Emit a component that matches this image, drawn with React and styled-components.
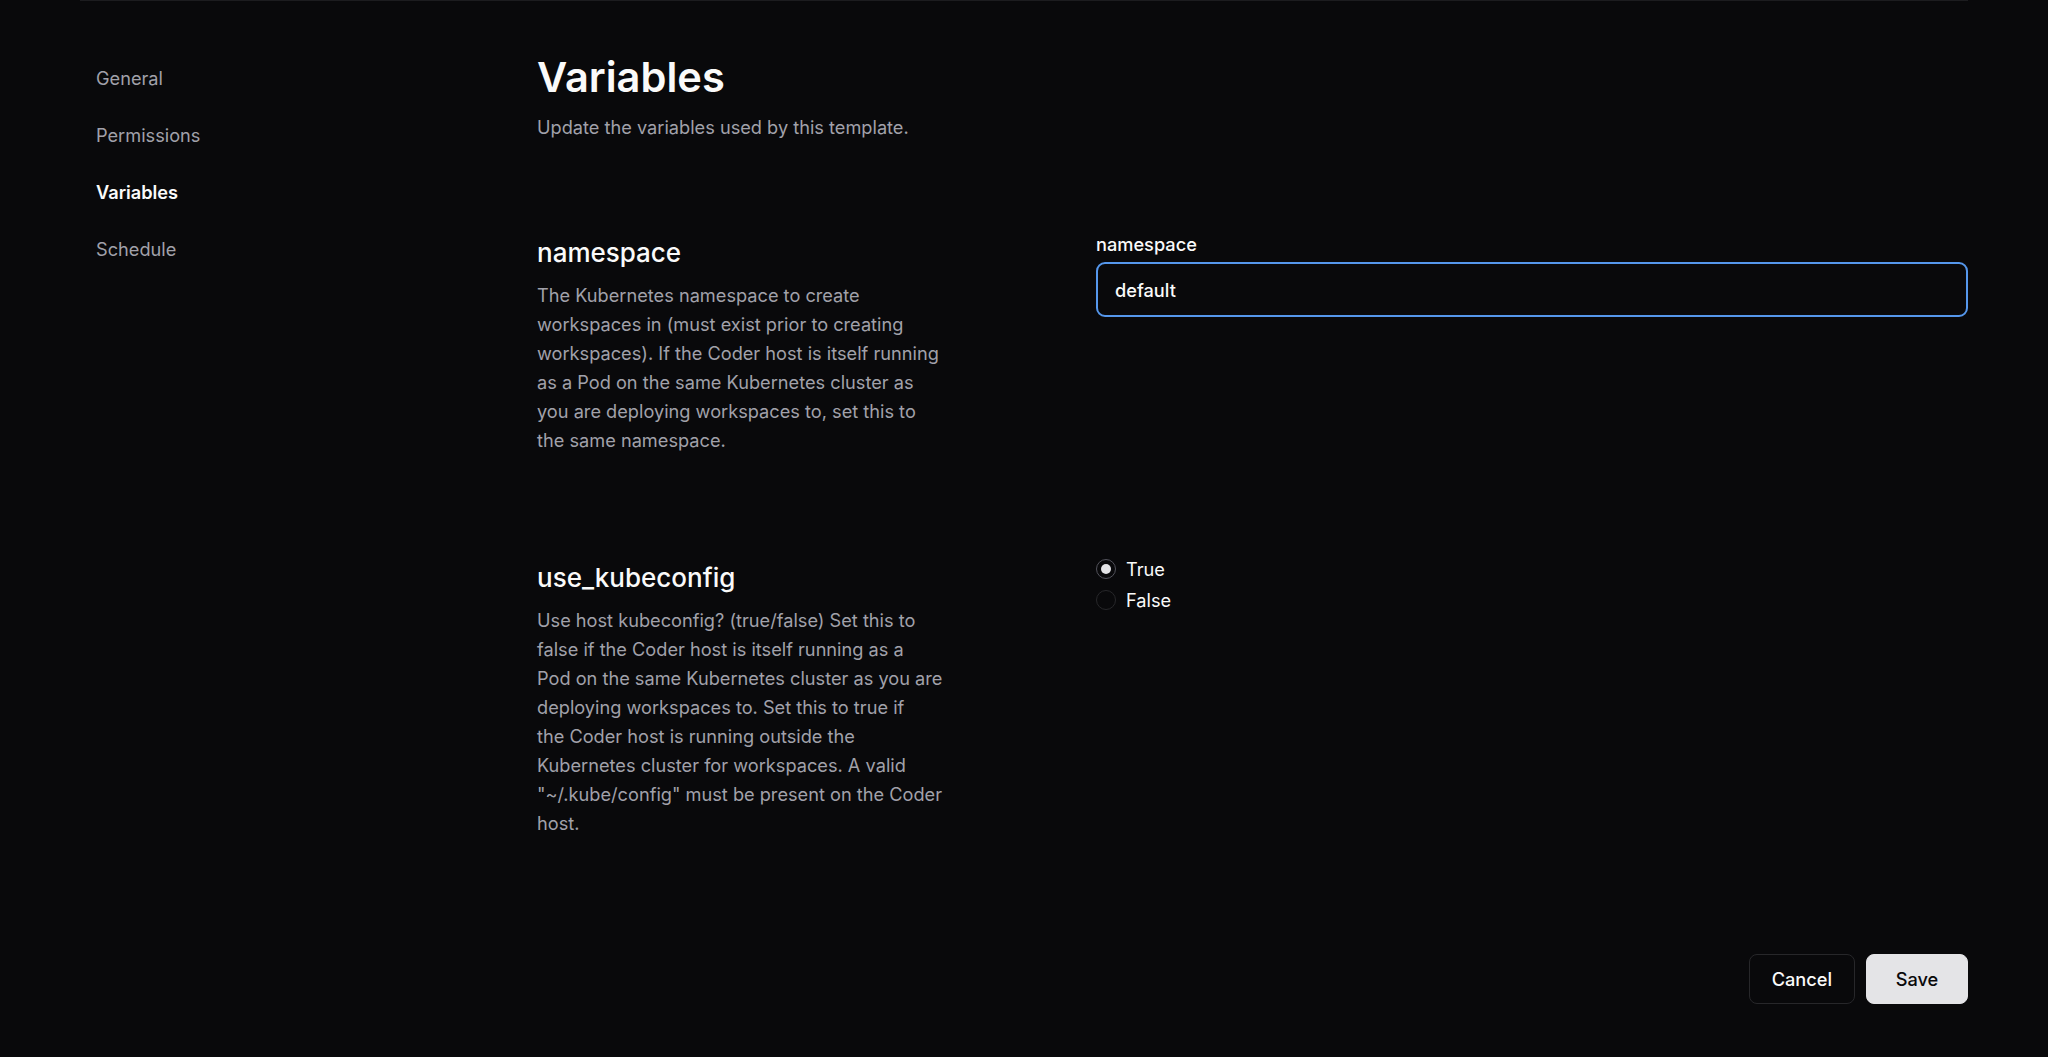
import React, { useState } from "react";
import styled, { createGlobalStyle } from "styled-components";

const GlobalStyle = createGlobalStyle`
  html, body {
    margin: 0;
    padding: 0;
    background: #09090b;
  }
  body {
    font-family: Inter, "Noto Sans", "Liberation Sans", sans-serif;
    color: #fafafa;
  }
  * { box-sizing: border-box; }
`;

const Container = styled.div`
  width: 1888px;
  margin: 0 auto;
  border-top: 1px solid #1c1c1f;
  padding: 49px 0 53px;
  display: flex;
  gap: 62px;
`;

const Sidebar = styled.nav`
  width: 395px;
  flex-shrink: 0;
  padding-left: 16px;
  display: flex;
  flex-direction: column;
`;

const NavItem = styled.a`
  display: block;
  font-size: 18.2px;
  line-height: 29px;
  padding: 14px 0;
  color: ${(p) => (p.$active ? "#fafafa" : "#a1a1aa")};
  font-weight: ${(p) => (p.$active ? 600 : 400)};
  text-decoration: none;
  cursor: pointer;
`;

const Main = styled.main`
  flex: 1;
  display: flex;
  flex-direction: column;
`;

const Title = styled.h1`
  margin: 0;
  font-size: 41.6px;
  line-height: 54px;
  font-weight: 600;
`;

const Subtitle = styled.p`
  margin: 9px 0 0;
  font-size: 18.2px;
  line-height: 29px;
  color: #a1a1aa;
`;

const Sections = styled.div`
  margin-top: 95px;
  display: flex;
  flex-direction: column;
  gap: 107px;
`;

const Section = styled.section`
  display: flex;
  gap: 156px;
  align-items: flex-start;
`;

const SectionHeader = styled.div`
  width: 403px;
  flex-shrink: 0;
`;

const SectionTitle = styled.h2`
  margin: 0;
  font-size: 26px;
  line-height: 31px;
  font-weight: 500;
`;

const SectionDesc = styled.p`
  margin: 13px 0 0;
  font-size: 18.2px;
  line-height: 29px;
  color: #a1a1aa;
  white-space: nowrap;
`;

const DescLine = styled.span`
  display: block;
`;

const Fields = styled.div`
  flex: 1;
  display: flex;
  flex-direction: column;
`;

const FieldLabel = styled.label`
  font-size: 18.2px;
  line-height: 18px;
  font-weight: 500;
  color: #fafafa;
  margin: -2px 0 9px;
`;

const TextInput = styled.input`
  height: 55px;
  width: 100%;
  padding: 0 17px;
  background: #09090b;
  border: 2px solid #5597ec;
  border-radius: 9px;
  color: #fafafa;
  font-family: inherit;
  font-size: 18.2px;
  font-weight: 500;
  outline: none;
`;

const RadioGroup = styled.div`
  margin-top: -9px;
  display: flex;
  flex-direction: column;
`;

const RadioRow = styled.label`
  display: flex;
  align-items: center;
  gap: 10px;
  height: 31px;
  cursor: pointer;
`;

const RadioCircle = styled.span`
  width: 20px;
  height: 20px;
  border-radius: 50%;
  border: 1.5px solid ${(p) => (p.$checked ? "#52525b" : "#27272a")};
  display: flex;
  align-items: center;
  justify-content: center;
  &::after {
    content: "";
    width: 10px;
    height: 10px;
    border-radius: 50%;
    background: #e4e4e7;
    display: ${(p) => (p.$checked ? "block" : "none")};
  }
`;

const RadioLabel = styled.span`
  font-size: 18.2px;
  color: #fafafa;
`;

const Footer = styled.div`
  margin-top: 116px;
  display: flex;
  justify-content: flex-end;
  gap: 11px;
`;

const Button = styled.button`
  height: 50px;
  min-width: 102px;
  padding: 0 22px;
  border-radius: 8px;
  font-family: inherit;
  font-size: 18.2px;
  font-weight: 500;
  cursor: pointer;
  border: 1px solid ${(p) => (p.$primary ? "#e4e4e7" : "#27272a")};
  background: ${(p) => (p.$primary ? "#e4e4e7" : "#09090b")};
  color: ${(p) => (p.$primary ? "#09090b" : "#fafafa")};
`;

const navItems = ["General", "Permissions", "Variables", "Schedule"];

// descriptions are kept in the lines the template page breaks them into
const variables = [
  {
    name: "namespace",
    type: "string",
    value: "default",
    description: [
      "The Kubernetes namespace to create",
      "workspaces in (must exist prior to creating",
      "workspaces). If the Coder host is itself running",
      "as a Pod on the same Kubernetes cluster as",
      "you are deploying workspaces to, set this to",
      "the same namespace.",
    ],
  },
  {
    name: "use_kubeconfig",
    type: "bool",
    value: "true",
    description: [
      "Use host kubeconfig? (true/false) Set this to",
      "false if the Coder host is itself running as a",
      "Pod on the same Kubernetes cluster as you are",
      "deploying workspaces to. Set this to true if",
      "the Coder host is running outside the",
      "Kubernetes cluster for workspaces. A valid",
      '"~/.kube/config" must be present on the Coder',
      "host.",
    ],
  },
];

const BoolField = ({ value, onChange }) => (
  <RadioGroup>
    {["true", "false"].map((v) => (
      <RadioRow key={v} onClick={() => onChange(v)}>
        <RadioCircle $checked={value === v} />
        <RadioLabel>{v === "true" ? "True" : "False"}</RadioLabel>
      </RadioRow>
    ))}
  </RadioGroup>
);

const App = () => {
  const [values, setValues] = useState(
    Object.fromEntries(variables.map((v) => [v.name, v.value]))
  );

  const setValue = (name, value) => setValues({ ...values, [name]: value });

  return (
    <>
      <GlobalStyle />
      <Container>
        <Sidebar>
          {navItems.map((item) => (
            <NavItem key={item} $active={item === "Variables"}>
              {item}
            </NavItem>
          ))}
        </Sidebar>
        <Main>
          <Title>Variables</Title>
          <Subtitle>Update the variables used by this template.</Subtitle>
          <Sections>
            {variables.map((v) => (
              <Section key={v.name}>
                <SectionHeader>
                  <SectionTitle>{v.name}</SectionTitle>
                  <SectionDesc>
                    {v.description.map((line) => (
                      <DescLine key={line}>{line}</DescLine>
                    ))}
                  </SectionDesc>
                </SectionHeader>
                <Fields>
                  {v.type === "bool" ? (
                    <BoolField
                      value={values[v.name]}
                      onChange={(val) => setValue(v.name, val)}
                    />
                  ) : (
                    <>
                      <FieldLabel>{v.name}</FieldLabel>
                      <TextInput
                        value={values[v.name]}
                        onChange={(e) => setValue(v.name, e.target.value)}
                      />
                    </>
                  )}
                </Fields>
              </Section>
            ))}
          </Sections>
          <Footer>
            <Button>Cancel</Button>
            <Button $primary>Save</Button>
          </Footer>
        </Main>
      </Container>
    </>
  );
};

export default App;
